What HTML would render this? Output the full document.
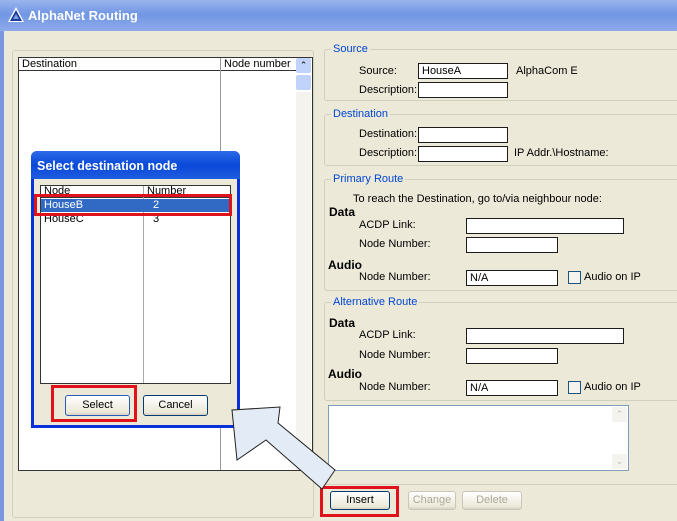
<!DOCTYPE html>
<html><head><style>
body{margin:0;width:677px;height:521px;overflow:hidden;background:#ece9d8;font-family:"Liberation Sans",sans-serif;font-size:11px;position:relative}
.a{position:absolute}
.in{position:absolute;background:#fff;border:1px solid #1c1c1c;box-sizing:border-box;font-size:11px;padding:1px 3px}
.gb{position:absolute;border:1px solid #d0d0bf;border-radius:3px;box-sizing:border-box}
.gt{position:absolute;color:#0046d5;background:#ece9d8;padding:0 2px;font-size:11px}
.lb{position:absolute}
.b{position:absolute;font-weight:bold;font-size:12px}
.btn{position:absolute;border:1px solid #003c74;border-radius:3px;background:linear-gradient(#fff,#ece9d8 85%,#d6d0c5);box-sizing:border-box;text-align:center;font-size:11px;line-height:18px}
.dis{border-color:#c9c7ba;color:#aca899}
.red{position:absolute;border:3px solid #e0121c;box-sizing:border-box}
</style></head><body>
<div class="a" style="left:0;top:0;width:677px;height:31px;background:linear-gradient(#9ab5ee,#7196e4 45%,#8eaaea)"></div>
<svg class="a" style="left:7px;top:6px" width="18" height="18"><polygon points="9,1 17,16 1,16" fill="#fff"/><polygon points="9,4 15,15 3,15" fill="#1a3a9a"/><polygon points="9,8 12,13 6,13" fill="#7fa0e8"/></svg>
<div class="a" style="left:28px;top:8px;color:#fff;font-weight:bold;font-size:13px">AlphaNet Routing</div>
<div class="a" style="left:0;top:31px;width:4px;height:490px;background:#7a96df"></div>
<div class="gb" style="left:12px;top:50px;width:302px;height:468px"></div>
<div class="a" style="left:18px;top:57px;width:295px;height:414px;background:#fff;border:1px solid #333;box-sizing:border-box"></div>
<div class="a" style="left:19px;top:58px;width:276px;height:12px;border-bottom:1px solid #333;padding-left:3px;line-height:12px">Destination</div>
<div class="a" style="left:220px;top:58px;width:1px;height:412px;background:#999"></div>
<div class="a" style="left:224px;top:58px;line-height:12px">Node number</div>
<div class="a" style="left:296px;top:58px;width:15px;height:15px;background:#c1d3fb;border-radius:2px;text-align:center;font-size:9px;line-height:15px">⌃</div>
<div class="a" style="left:296px;top:75px;width:15px;height:15px;background:#c1d3fb;border-radius:2px"></div>
<div class="a" style="left:296px;top:92px;width:15px;height:378px;background:#f4f3ee"></div>
<!-- dialog -->
<div class="a" style="left:31px;top:151px;width:209px;height:277px;background:#ece9d8;border:3px solid #0831d9;border-top:none;box-sizing:border-box;border-radius:6px 6px 0 0"></div>
<div class="a" style="left:31px;top:151px;width:209px;height:28px;background:linear-gradient(#2d6be8,#0a49d8 50%,#1e5ce0);border-radius:6px 6px 0 0"></div>
<div class="a" style="left:37px;top:159px;color:#fff;font-weight:bold;font-size:12.5px">Select destination node</div>
<div class="a" style="left:40px;top:185px;width:191px;height:199px;background:#fff;border:1px solid #333;box-sizing:border-box"></div>
<div class="a" style="left:41px;top:186px;width:189px;height:11px;border-bottom:1px solid #333"></div>
<div class="a" style="left:44px;top:185px;line-height:12px">Node</div>
<div class="a" style="left:147px;top:185px;line-height:12px">Number</div>
<div class="a" style="left:143px;top:186px;width:1px;height:197px;background:#aaa"></div>
<div class="a" style="left:41px;top:199px;width:189px;height:13px;background:#316ac5"></div>
<div class="a" style="left:44px;top:199px;color:#fff;line-height:13px">HouseB</div>
<div class="a" style="left:153px;top:199px;color:#fff;line-height:13px">2</div>
<div class="a" style="left:44px;top:213px;line-height:13px">HouseC</div>
<div class="a" style="left:153px;top:213px;line-height:13px">3</div>
<div class="red" style="left:34px;top:194px;width:198px;height:22px"></div>
<div class="btn" style="left:65px;top:395px;width:65px;height:21px;border-color:#2c5ab8;line-height:19px">Select</div>
<div class="btn" style="left:143px;top:395px;width:65px;height:21px;line-height:19px">Cancel</div>
<div class="red" style="left:51px;top:385px;width:86px;height:37px"></div>
<!-- right -->
<div class="gb" style="left:324px;top:49px;width:360px;height:52px"></div>
<div class="gt" style="left:331px;top:43px">Source</div>
<div class="lb" style="left:359px;top:65px">Source:</div>
<div class="in" style="left:418px;top:63px;width:90px;height:16px">HouseA</div>
<div class="a" style="left:516px;top:65px">AlphaCom E</div>
<div class="lb" style="left:359px;top:84px">Description:</div>
<div class="in" style="left:418px;top:82px;width:90px;height:16px"></div>
<div class="gb" style="left:324px;top:114px;width:360px;height:52px"></div>
<div class="gt" style="left:331px;top:108px">Destination</div>
<div class="lb" style="left:359px;top:128px">Destination:</div>
<div class="in" style="left:418px;top:127px;width:90px;height:16px"></div>
<div class="lb" style="left:359px;top:147px">Description:</div>
<div class="in" style="left:418px;top:146px;width:90px;height:16px"></div>
<div class="a" style="left:514px;top:147px">IP Addr.\Hostname:</div>
<div class="gb" style="left:324px;top:179px;width:360px;height:112px"></div>
<div class="gt" style="left:331px;top:173px">Primary Route</div>
<div class="a" style="left:353px;top:193px">To reach the Destination, go to/via neighbour node:</div>
<div class="b" style="left:329px;top:205px">Data</div>
<div class="a" style="left:359px;top:219px">ACDP Link:</div>
<div class="in" style="left:466px;top:218px;width:158px;height:16px"></div>
<div class="a" style="left:359px;top:238px">Node Number:</div>
<div class="in" style="left:466px;top:237px;width:92px;height:16px"></div>
<div class="b" style="left:328px;top:258px">Audio</div>
<div class="a" style="left:359px;top:271px">Node Number:</div>
<div class="in" style="left:466px;top:270px;width:92px;height:16px">N/A</div>
<div class="a" style="left:568px;top:271px;width:13px;height:13px;border:1px solid #1c5180;box-sizing:border-box;background:#f4f3ee"></div>
<div class="a" style="left:584px;top:271px">Audio on IP</div>
<div class="gb" style="left:324px;top:302px;width:360px;height:99px"></div>
<div class="gt" style="left:331px;top:296px">Alternative Route</div>
<div class="b" style="left:329px;top:316px">Data</div>
<div class="a" style="left:359px;top:329px">ACDP Link:</div>
<div class="in" style="left:466px;top:328px;width:158px;height:16px"></div>
<div class="a" style="left:359px;top:349px">Node Number:</div>
<div class="in" style="left:466px;top:348px;width:92px;height:16px"></div>
<div class="b" style="left:328px;top:367px">Audio</div>
<div class="a" style="left:359px;top:381px">Node Number:</div>
<div class="in" style="left:466px;top:380px;width:92px;height:16px">N/A</div>
<div class="a" style="left:568px;top:381px;width:13px;height:13px;border:1px solid #1c5180;box-sizing:border-box;background:#f4f3ee"></div>
<div class="a" style="left:584px;top:381px">Audio on IP</div>
<div class="a" style="left:328px;top:405px;width:301px;height:66px;background:#fff;border:1px solid #7f9db9;box-sizing:border-box"></div>
<div class="a" style="left:612px;top:407px;width:15px;height:15px;background:#f4f3ee;color:#bbb;text-align:center;font-size:9px;line-height:15px">⌃</div>
<div class="a" style="left:612px;top:454px;width:15px;height:15px;background:#f4f3ee;color:#bbb;text-align:center;font-size:9px;line-height:15px">⌄</div>
<div class="a" style="left:320px;top:484px;width:357px;height:1px;background:#d0d0bf"></div>
<div class="btn" style="left:330px;top:491px;width:60px;height:19px;line-height:17px">Insert</div>
<div class="btn dis" style="left:408px;top:491px;width:48px;height:19px;line-height:17px">Change</div>
<div class="btn dis" style="left:462px;top:491px;width:60px;height:19px;line-height:17px">Delete</div>
<div class="red" style="left:320px;top:486px;width:79px;height:31px"></div>
<svg class="a" style="left:0;top:0" width="677" height="521"><polygon points="232,410 280,407 278,423 335,470 322,489 266,440 237,460" fill="#e3ebf7" stroke="#222" stroke-width="1"/></svg>
</body></html>
